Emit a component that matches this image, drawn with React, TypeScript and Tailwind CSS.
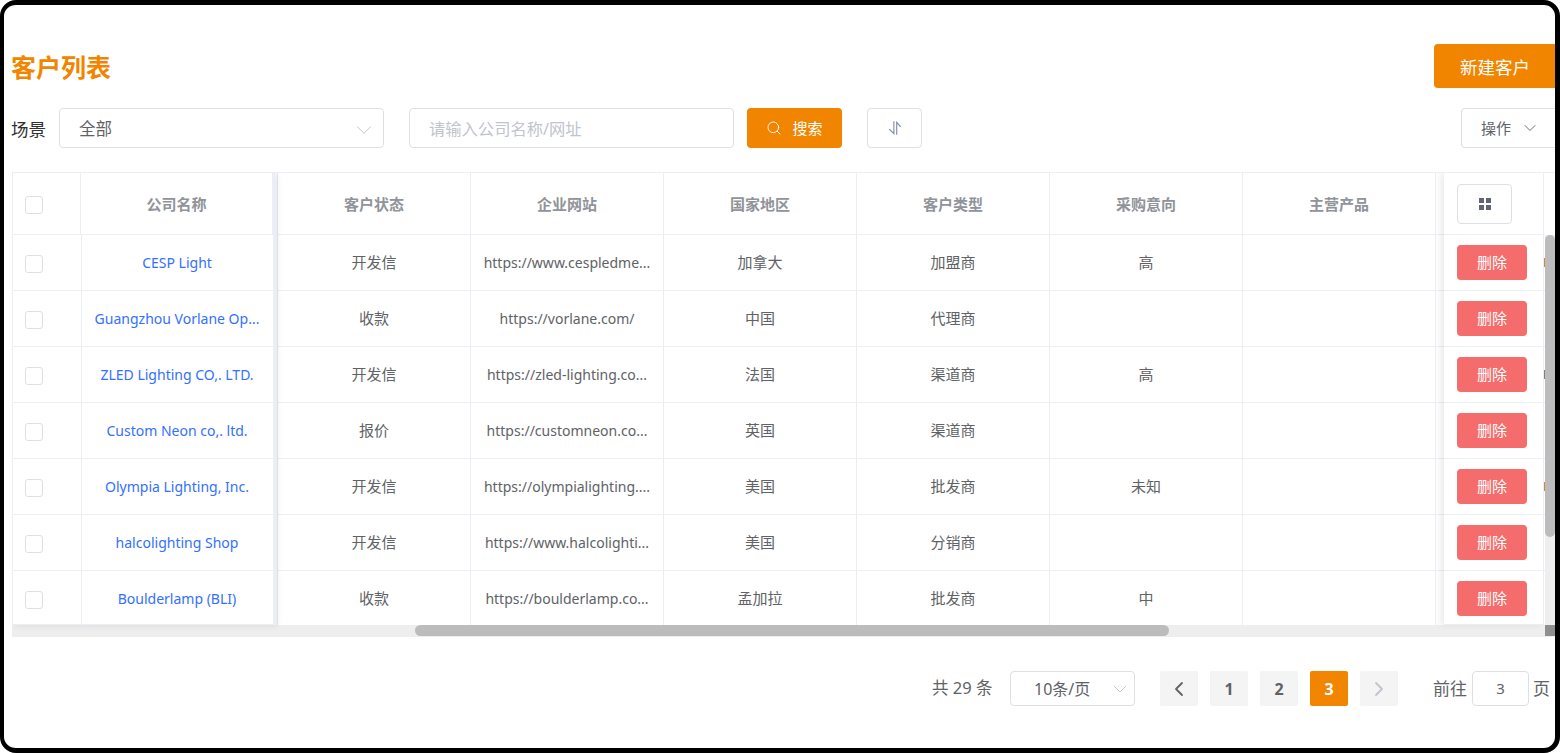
import { ChevronDown, ChevronLeft, ChevronRight, Search } from "lucide-react";

const rows = [
  ["CESP Light", "开发信", "https://www.cespledme...", "加拿大", "加盟商", "高", "#c98a4a"],
  ["Guangzhou Vorlane Op...", "收款", "https://vorlane.com/", "中国", "代理商", "", ""],
  ["ZLED Lighting CO,. LTD.", "开发信", "https://zled-lighting.co...", "法国", "渠道商", "高", "#8a7f70"],
  ["Custom Neon co,. ltd.", "报价", "https://customneon.co...", "英国", "渠道商", "", ""],
  ["Olympia Lighting, Inc.", "开发信", "https://olympialighting....", "美国", "批发商", "未知", "#c98a4a"],
  ["halcolighting Shop", "开发信", "https://www.halcolighti...", "美国", "分销商", "", ""],
  ["Boulderlamp (BLI)", "收款", "https://boulderlamp.co...", "孟加拉", "批发商", "中", ""],
] as const;

const headers = ["客户状态", "企业网站", "国家地区", "客户类型", "采购意向", "主营产品"];

const Cell = ({ children, cjk = true, head = false }: { children?: React.ReactNode; cjk?: boolean; head?: boolean }) => (
  <div className={`w-[193px] shrink-0 border-r border-[#ebeef5] flex items-center justify-center px-3 whitespace-nowrap ${cjk ? "text-[15px]" : "text-[14px]"} ${head ? "pt-[2px]" : ""}`}>
    {children}
  </div>
);

const Checkbox = () => (
  <span className="block w-[18px] h-[18px] mt-[2px] rounded-[3px] border border-[#dcdfe6] bg-white" />
);

const App = () => {
  return (
    <div
      className="w-[1560px] h-[753px] bg-white overflow-hidden text-[14px] text-[#606266]"
      style={{ fontFamily: '"Noto Sans", "Noto Sans CJK SC", sans-serif' }}
    >
      <div className="w-[1560px] h-[753px] bg-white rounded-[16px] border-y-[5px] border-l-4 border-r-[5px] border-black overflow-hidden pl-[8px]">
        <div className="flex items-center justify-between h-[44px] mt-[39px]">
          <h1 className="text-[25px] leading-[32px] font-bold text-[#f28500] pt-[1px] -ml-[1px]">客户列表</h1>
          <button className="w-[121px] h-[44px] pt-[2px] pl-[1px] rounded-l-[4px] bg-[#f28500] text-white text-[17.5px]">新建客户</button>
        </div>
        <div className="flex items-center h-[40px] mt-[20px]">
          <span className="w-[47px] pt-[2px] -ml-[1px] mr-[1px] text-[#303133] text-[17.5px]">场景</span>
          <div className="w-[325px] h-[40px] rounded-[4px] border border-[#dcdfe6] flex items-center justify-between pl-[19px] pr-[6px] text-[16.5px]">
            <span className="pt-[2px]">全部</span>
            <ChevronDown size={26} strokeWidth={0.9} className="text-[#c0c4cc] mt-[3px]" />
          </div>
          <div className="w-[325px] h-[40px] ml-[25px] pt-[2px] rounded-[4px] border border-[#dcdfe6] flex items-center pl-[19px] text-[#c0c4cc] text-[16.3px]">
            请输入公司名称/网址
          </div>
          <button className="w-[95px] h-[40px] ml-[13px] rounded-[4px] bg-[#f28500] text-white text-[15px] flex items-center justify-center gap-[10px]">
            <Search size={16} strokeWidth={1.4} />
            搜索
          </button>
          <button className="w-[55px] h-[40px] ml-[25px] rounded-[4px] border border-[#dcdfe6] flex items-center justify-center">
            <svg width="16" height="16" viewBox="0 0 14 14" fill="none" stroke="#7f8ea3" strokeWidth="1">
              <path d="M6 1v11L2 8M8.500 13V2l3.500 4" />
            </svg>
          </button>
          <button className="w-[94px] h-[40px] ml-auto rounded-l-[4px] border border-r-0 border-[#dcdfe6] flex items-center pl-[19px] gap-[9px] text-[15px]">
            操作
            <ChevronDown size={20} strokeWidth={1.1} />
          </button>
        </div>

        <div className="mt-[24px] border-t border-[#ebeef5] h-[465px] overflow-hidden">
          <div className="flex h-[452px] bg-white">
            <div className="w-[263px] shrink-0 border-l border-r-2 border-b border-[#ebeef5] shadow-[3px_2px_6px_rgba(0,0,0,0.06)] z-10 bg-white">
              <div className="flex h-[62px] border-b border-[#ebeef5] font-bold text-[#909399] text-[15px]">
                <div className="w-[68px] border-r border-[#ebeef5] flex items-center pl-[12px]"><Checkbox /></div>
                <div className="flex-1 flex items-center justify-center pt-[2px] border-r border-[#ebeef5]">公司名称</div>
              </div>
              {rows.map((r, i) => (
                <div key={r[0]} className={`flex h-[56px] border-b ${i < 6 ? "border-[#ebeef5]" : "border-transparent"}`}>
                  <div className="w-[69px] border-r border-[#ebeef5] flex items-center pl-[12px]"><Checkbox /></div>
                  <div className="flex-1 flex items-center justify-center pr-[1px] text-[#3370ff] whitespace-nowrap">{r[0]}</div>
                </div>
              ))}
            </div>
            <div className="w-[1169px] shrink-0 overflow-hidden flex">
              <div className="w-[3px] shrink-0 border-r border-[#e6e6ee] bg-[#f8f8fb]" />
              <div className="w-[1158px] shrink-0">
                <div className="flex h-[62px] border-b border-[#ebeef5] font-bold text-[#909399]">
                  {headers.map((h) => <Cell key={h} head>{h}</Cell>)}
                </div>
                {rows.map((r) => (
                  <div key={r[0]} className="flex h-[56px] border-b border-[#ebeef5]">
                    <Cell>{r[1]}</Cell>
                    <Cell cjk={false}>{r[2]}</Cell>
                    <Cell>{r[3]}</Cell>
                    <Cell>{r[4]}</Cell>
                    <Cell>{r[5]}</Cell>
                    <Cell />
                  </div>
                ))}
              </div>
              <div className="flex-1">
                <div className="h-[62px] border-b border-[#ebeef5]" />
                {rows.map((r) => <div key={r[0]} className="h-[56px] border-b border-[#ebeef5]" />)}
              </div>
            </div>
            <div className="w-[100px] shrink-0 border-r border-b border-[#ebeef5] shadow-[-4px_0_6px_rgba(0,0,0,0.07)] z-10 bg-white">
              <div className="h-[62px] border-b border-[#ebeef5] flex items-center pl-[13px]">
                <button className="w-[55px] h-[40px] rounded-[4px] border border-[#dcdfe6] flex items-center justify-center">
                  <svg width="12" height="12" viewBox="0 0 12 12" fill="#5f6672">
                    <rect x="0" y="0" width="5" height="5" />
                    <rect x="7" y="0" width="5" height="5" />
                    <rect x="0" y="7" width="5" height="5" />
                    <rect x="7" y="7" width="5" height="5" />
                  </svg>
                </button>
              </div>
              {rows.map((r, i) => (
                <div key={r[0]} className={`h-[56px] border-b ${i < 6 ? "border-[#ebeef5]" : "border-transparent"} flex items-center pl-[13px]`}>
                  <button className="w-[70px] h-[35px] rounded-[4px] bg-[#f56c6c] text-white text-[15px]">删除</button>
                </div>
              ))}
            </div>
            <div className="w-[1px] shrink-0 bg-white">
              <div className="h-[62px]" />
              {rows.map((r) => (
                <div key={r[0]} className="h-[56px] border-b border-[#ebeef5] flex items-center">
                  {r[6] ? <span className="block w-[1px] h-[9px]" style={{ backgroundColor: r[6] }} /> : null}
                </div>
              ))}
            </div>
            <div className="w-[10px] shrink-0 flex flex-col">
              <div className="h-[62px] bg-white" />
              <div className="flex-1 bg-[#eeeeee]">
                <div className="h-[302px] bg-[#bcbcbc] rounded-[5px]" />
              </div>
            </div>
          </div>
          <div className="h-[12px] bg-[#eeeeee] flex items-start">
            <div className="ml-[403px] w-[754px] h-[11px] rounded-full bg-[#bcbcbc]" />
            <div className="ml-auto w-[10px] h-[11px] bg-[#8f8f8f]" />
          </div>
        </div>

        <div className="flex items-center h-[35px] mt-[34px]">
          <span className="ml-[920px] w-[78px] text-[16.5px]">共 29 条</span>
          <div className="w-[125px] h-[35px] rounded-[4px] border border-[#dcdfe6] flex items-center justify-between pl-[23px] pr-[2px] text-[16px]">
            <span>10条/页</span>
            <ChevronDown size={24} strokeWidth={0.9} className="text-[#c0c4cc]" />
          </div>
          <div className="flex gap-[12px] ml-[25px] font-bold text-[16px]">
            <div className="w-[38px] h-[35px] rounded-[2px] bg-[#f4f4f5] flex items-center justify-center"><ChevronLeft size={24} strokeWidth={1.8} /></div>
            <div className="w-[38px] h-[35px] rounded-[2px] bg-[#f4f4f5] flex items-center justify-center">1</div>
            <div className="w-[38px] h-[35px] rounded-[2px] bg-[#f4f4f5] flex items-center justify-center">2</div>
            <div className="w-[38px] h-[35px] rounded-[2px] bg-[#f28500] text-white flex items-center justify-center">3</div>
            <div className="w-[38px] h-[35px] rounded-[2px] bg-[#f4f4f5] text-[#c0c4cc] flex items-center justify-center"><ChevronRight size={24} strokeWidth={1.8} /></div>
          </div>
          <span className="ml-[35px] text-[17px]">前往</span>
          <div className="w-[57px] h-[35px] ml-[5px] rounded-[4px] border border-[#dcdfe6] flex items-center justify-center text-[15px]">3</div>
          <span className="ml-[4px] text-[17px]">页</span>
        </div>
      </div>
    </div>
  );
};

export default App;
